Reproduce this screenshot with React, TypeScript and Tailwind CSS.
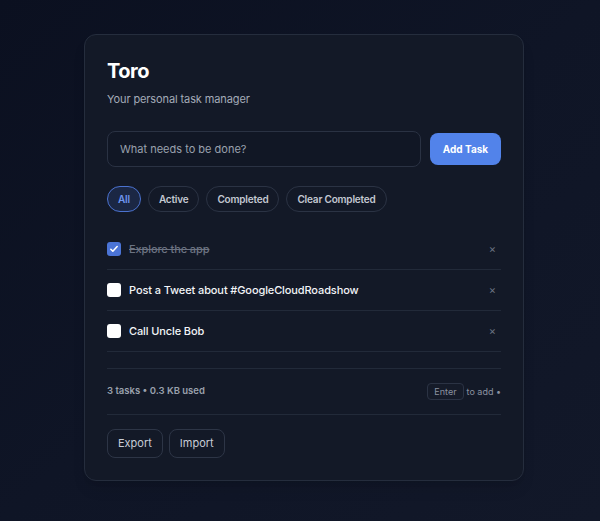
import { useState } from 'react';

type Task = { id: number; text: string; done: boolean };

const initialTasks: Task[] = [
  { id: 1, text: 'Explore the app', done: true },
  { id: 2, text: 'Post a Tweet about #GoogleCloudRoadshow', done: false },
  { id: 3, text: 'Call Uncle Bob', done: false },
];

export default function App() {
  const [tasks, setTasks] = useState<Task[]>(initialTasks);
  const [filter, setFilter] = useState('All');
  const [draft, setDraft] = useState('');

  const addTask = () => {
    if (!draft.trim()) return;
    setTasks([...tasks, { id: Date.now(), text: draft.trim(), done: false }]);
    setDraft('');
  };

  const visible = tasks.filter((t) =>
    filter === 'Active' ? !t.done : filter === 'Completed' ? t.done : true
  );

  return (
    <div className="min-h-[521px] w-full bg-gradient-to-br from-[#0b1020] via-[#0f1526] to-[#121829] pt-[34px] pl-2 font-['Inter',sans-serif]">
      <div className="mx-auto w-[440px] rounded-xl border border-[#252d3d] bg-[#131927] p-[22px] shadow-lg">
        {/* Header */}
        <h1 className="text-[20px] leading-7 font-bold tracking-tight text-white">Toro</h1>
        <p className="mt-1 text-[11px] leading-5 tracking-[-0.01em] text-[#a4abb8]">Your personal task manager</p>

        {/* New task */}
        <div className="mt-[22px] flex items-center gap-[9px]">
          <input
            value={draft}
            onChange={(e) => setDraft(e.target.value)}
            onKeyDown={(e) => e.key === 'Enter' && addTask()}
            placeholder="What needs to be done?"
            className="h-9 flex-1 rounded-lg border border-[#2a3243] bg-[#111725] px-3 text-[11px] text-white placeholder:text-[#9aa1ae] outline-none"
          />
          <button
            onClick={addTask}
            className="h-8 w-[71px] rounded-lg bg-[#5283ea] text-[10px] font-bold text-white"
          >
            Add Task
          </button>
        </div>

        {/* Filters */}
        <div className="mt-[19px] flex gap-[7px]">
          {['All', 'Active', 'Completed'].map((f) => (
            <button
              key={f}
              onClick={() => setFilter(f)}
              className={
                filter === f
                  ? 'h-[26px] rounded-full border border-[#4b72cf] bg-[#1b2744] px-[10px] text-[10px] font-semibold tracking-[-0.02em] text-[#6e95ee]'
                  : 'h-[26px] rounded-full border border-[#2b3344] px-[10px] text-[10px] font-semibold tracking-[-0.02em] text-[#c3c8d2]'
              }
            >
              {f}
            </button>
          ))}
          <button
            onClick={() => setTasks(tasks.filter((t) => !t.done))}
            className="h-[26px] rounded-full border border-[#2b3344] px-[10px] text-[10px] font-semibold tracking-[-0.02em] text-[#c3c8d2]"
          >
            Clear Completed
          </button>
        </div>

        {/* Task list */}
        <ul className="mt-[17px]">
          {visible.map((t) => (
            <li key={t.id} className="flex h-[41px] items-center border-b border-[#222a39]">
              <button
                onClick={() =>
                  setTasks(tasks.map((x) => (x.id === t.id ? { ...x, done: !x.done } : x)))
                }
                className={
                  t.done
                    ? 'flex h-[14px] w-[14px] items-center justify-center rounded-[3px] bg-[#4b74d6]'
                    : 'h-[14px] w-[14px] rounded-[3px] bg-white'
                }
              >
                {t.done && (
                  <svg viewBox="0 0 12 12" className="h-[10px] w-[10px]">
                    <path d="M2.2 6.3l2.4 2.4 5.2-5.6" fill="none" stroke="white" strokeWidth="1.9" strokeLinecap="round" strokeLinejoin="round" />
                  </svg>
                )}
              </button>
              <span
                className={
                  t.done
                    ? 'ml-2 flex-1 text-[11px] font-medium tracking-[-0.01em] text-[#6c7382] line-through'
                    : 'ml-2 flex-1 text-[11px] font-medium tracking-[-0.01em] text-[#f2f4f7]'
                }
              >
                {t.text}
              </span>
              <button
                onClick={() => setTasks(tasks.filter((x) => x.id !== t.id))}
                className="mr-[5px] text-[11px] leading-none text-[#6b7280]"
              >
                ×
              </button>
            </li>
          ))}
        </ul>

        {/* Footer */}
        <div className="mt-4 flex items-center justify-between border-t border-[#222a39] py-[14px]">
          <span className="text-[9.5px] font-semibold text-[#9aa1ad]">
            {tasks.length} tasks • 0.3 KB used
          </span>
          <span className="flex items-center gap-[3px] text-[9px] text-[#8b92a0]">
            <kbd className="rounded-[4px] border border-[#2b3344] bg-[#151b29] px-[6px] py-[1px] font-['Inter',sans-serif] text-[9px] leading-[13px]">
              Enter
            </kbd>
            to add •
          </span>
        </div>

        <div className="flex gap-[6px] border-t border-[#222a39] pt-[14px]">
          <button className="h-[29px] rounded-lg border border-[#2d3546] px-[10px] text-[11px] text-[#c7ccd6]">
            Export
          </button>
          <button className="h-[29px] rounded-lg border border-[#2d3546] px-[10px] text-[11px] text-[#c7ccd6]">
            Import
          </button>
        </div>
      </div>
    </div>
  );
}
